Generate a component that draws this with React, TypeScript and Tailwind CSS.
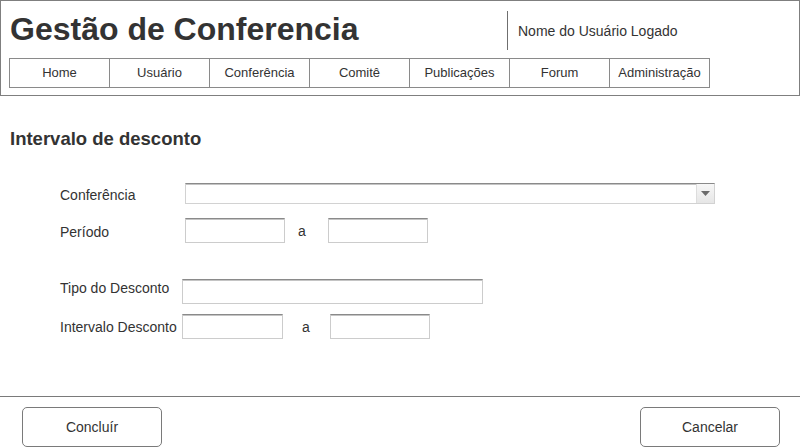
import React from "react";

const navItems = ["Home", "Usuário", "Conferência", "Comitê", "Publicações", "Forum", "Administração"];

function TextInput({ w }: { w: string }) {
  return (
    <div
      className={`${w} h-[25px] bg-white border border-[#cccccc] border-t-[#8a8a8a] shadow-[inset_0_1px_0_#c4c4c4]`}
    />
  );
}

export default function App() {
  return (
    <div className="w-[800px] h-[447px] overflow-hidden bg-white text-[#333333] font-['Liberation_Sans',Arial,sans-serif] flex flex-col">
      {/* Header */}
      <div className="w-[800px] h-[96px] border border-[#7f7f7f] flex flex-col shrink-0">
        <div className="h-[57px] flex items-start">
          <div className="w-[506px] pl-[9px] pt-[12px]">
            <h1 className="text-[32px] leading-[32px] font-bold text-[#333333]">
              Gestão de Conferencia
            </h1>
          </div>
          <div className="mt-[10px] h-[39px] border-l border-[#6f6f6f] flex items-center pl-[10px]">
            <span className="text-[14px] leading-[16px] text-[#333333]">Nome do Usuário Logado</span>
          </div>
        </div>
        <div className="flex ml-[8px] h-[30px]">
          {navItems.map((item, i) => (
            <div
              key={item}
              className={`${i === 0 ? "w-[101px] border-l" : "w-[100px]"} h-[30px] border-t border-b border-r border-[#8a8a8a] flex items-center justify-center text-[13px] text-[#333333]`}
            >
              {item}
            </div>
          ))}
        </div>
      </div>

      {/* Main */}
      <div className="h-[300px] shrink-0 pt-[33px]">
        <h2 className="pl-[10px] text-[18.5px] leading-[20px] font-bold text-[#333333]">Intervalo de desconto</h2>

        <div className="pl-[60px] mt-[34px] flex flex-col">
          {/* Conferência */}
          <div className="flex items-center h-[21px]">
            <span className="w-[125px] pt-[3px] text-[14px] text-[#333333]">Conferência</span>
            <div className="w-[530px] h-[21px] flex bg-white border border-[#d2d2d2] border-t-[#8a8a8a] shadow-[inset_0_1px_0_#c4c4c4]">
              <div className="flex-1" />
              <div className="w-[18px] h-full border-l border-[#dddddd] bg-gradient-to-b from-[#f7f7f7] to-[#e6e6e6] flex items-center justify-center">
                <svg width="9" height="5" viewBox="0 0 9 5">
                  <polygon points="0,0 9,0 4.5,5" fill="#6b6b6b" />
                </svg>
              </div>
            </div>
          </div>

          {/* Período */}
          <div className="flex items-center h-[25px] mt-[14px]">
            <span className="w-[125px] pt-[3px] text-[14px] text-[#333333]">Período</span>
            <TextInput w="w-[100px]" />
            <span className="w-[43px] pl-[13px] pt-[2px] text-[14px] text-[#333333]">a</span>
            <TextInput w="w-[100px]" />
          </div>

          {/* Tipo do Desconto */}
          <div className="flex items-center h-[25px] mt-[36px]">
            <span className="w-[122px] text-[14px] text-[#333333] mb-[7px]">Tipo do Desconto</span>
            <TextInput w="w-[301px]" />
          </div>

          {/* Intervalo Desconto */}
          <div className="flex items-center h-[25px] mt-[10px]">
            <span className="w-[122px] pt-[2px] text-[14px] text-[#333333] whitespace-nowrap">Intervalo Desconto</span>
            <TextInput w="w-[101px]" />
            <span className="w-[47px] pl-[19px] pt-[2px] text-[14px] text-[#333333]">a</span>
            <TextInput w="w-[100px]" />
          </div>
        </div>
      </div>

      {/* Footer */}
      <div className="flex-1 border-t border-[#7a7a7a] flex justify-between items-start pl-[22px] pr-[20px] pt-[10px]">
        <button className="w-[140px] h-[40px] border border-[#7a7a7a] rounded-[5px] bg-white text-[14px] text-[#333333] flex items-center justify-center">
          Concluír
        </button>
        <button className="w-[140px] h-[40px] border border-[#7a7a7a] rounded-[5px] bg-white text-[14px] text-[#333333] flex items-center justify-center">
          Cancelar
        </button>
      </div>
    </div>
  );
}
